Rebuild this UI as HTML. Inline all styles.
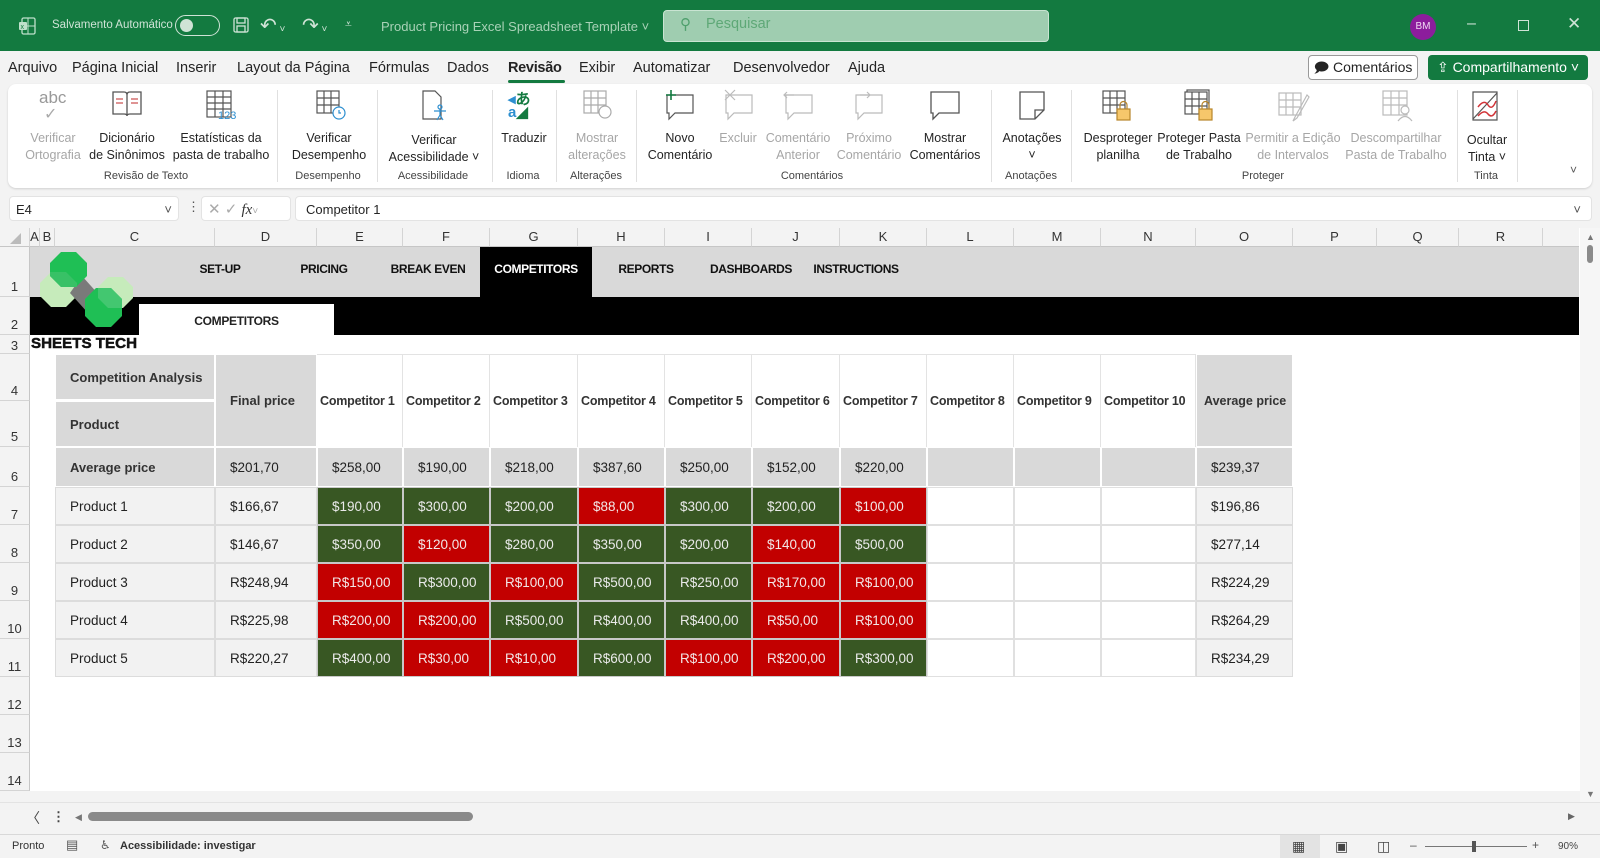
<!DOCTYPE html>
<html><head><meta charset="utf-8">
<style>
*{box-sizing:border-box;margin:0;padding:0}
body{width:1600px;height:858px;overflow:hidden;background:#f3f3f3;font-family:"Liberation Sans",sans-serif;position:relative;color:#242424}
.a{position:absolute}
.title{left:0;top:0;width:1600px;height:51px;background:#137a40}
.tw{color:#cfe3d6;font-size:12px;white-space:nowrap}
.menu span{position:absolute;top:60px;font-size:14.5px;color:#242424;white-space:nowrap}
.ribbon{left:8px;top:84px;width:1584px;height:104px;background:#fff;border-radius:8px;box-shadow:0 1px 2px rgba(0,0,0,.15)}
.btn{position:absolute;top:130px;font-size:12.5px;line-height:17px;text-align:center;white-space:nowrap;transform:translateX(-50%);color:#242424}
.dis{color:#a6a6a6}
.grp{position:absolute;top:170px;font-size:11px;transform:translateX(-50%);color:#444;white-space:nowrap}
.sep{position:absolute;top:90px;width:1px;height:92px;background:#e0e0e0}
.ic{position:absolute;top:89px}
.sheet{position:absolute;left:0;top:228px;width:1580px;display:grid;grid-template-columns:30px 10px 15px 160px 102px 86px 87px 88px 87px 87px 88px 87px 87px 87px 95px 97px 84px 82px 84px 36px;grid-template-rows:19px 50px 38px 19px 47px 46px 40px repeat(8,38px);background:#fff}
.ch{background:#f3f3f3;border-right:1px solid #d4d4d4;border-bottom:1px solid #c6c6c6;font-size:13px;text-align:center;line-height:18px;color:#333}
.rh{background:#f3f3f3;border-right:1px solid #c6c6c6;border-bottom:1px solid #d4d4d4;font-size:13px;display:flex;align-items:flex-end;justify-content:center;padding-bottom:2px;color:#333}
.c{font-size:13.5px;display:flex;align-items:center;padding-left:14px;white-space:nowrap}
.g{background:#d9d9d9;border:1px solid #fff;font-weight:bold;color:#333;font-size:13px}
.gb{background:#d9d9d9;border:1px solid #fff;color:#222}
.l{background:#f2f2f2;border:1px solid #dcdcdc;color:#222}
.w{background:#fff;border:1px solid #e0e0e0}
.G{background:#385723;color:#eaeaea;border:1px solid #c8c8c8}
.R{background:#c20000;color:#f2e6e6;border:1px solid #c8c8c8}
.hd{background:#fff;border-right:1px solid #e3e3e3;border-top:1px solid #e3e3e3;font-weight:bold;font-size:12.5px;color:#333;padding-left:3px;letter-spacing:-.2px}
.nav{font-weight:bold;font-size:12px;color:#111;position:absolute;top:262px;transform:translateX(-50%);white-space:nowrap;letter-spacing:-.4px}
</style></head><body>
<div class="a title"></div>
<svg class="a" style="left:17px;top:16px" width="20" height="20" viewBox="0 0 20 20"><rect x="5" y="2" width="13" height="16" rx="1.5" fill="none" stroke="#bfe0cb" stroke-width="1.3"/><line x1="11" y1="2" x2="11" y2="18" stroke="#bfe0cb"/><line x1="5" y1="10" x2="18" y2="10" stroke="#bfe0cb"/><rect x="2" y="6" width="8" height="8" rx="1" fill="#bfe0cb"/><text x="3.5" y="13" font-size="7" fill="#137a40" font-family="Liberation Sans">x</text></svg>
<div class="a tw" style="left:52px;top:19px;font-size:11.5px">Salvamento Automático</div>
<div class="a" style="left:175px;top:15px;width:45px;height:21px;border:1.5px solid #cfe3d6;border-radius:11px"></div>
<div class="a" style="left:180px;top:19px;width:13px;height:13px;border-radius:50%;background:#cfe3d6"></div>
<svg class="a" style="left:232px;top:16px" width="18" height="18" viewBox="0 0 18 18" fill="none" stroke="#cfe3d6" stroke-width="1.3"><rect x="2" y="2" width="14" height="14" rx="1.5"/><rect x="5" y="2" width="8" height="5"/><rect x="5" y="10" width="8" height="6"/></svg>
<div class="a tw" style="left:260px;top:13px;font-size:20px">↶<span style="font-size:10px"> ˅</span></div>
<div class="a tw" style="left:302px;top:13px;font-size:20px">↷<span style="font-size:10px"> ˅</span></div>
<div class="a tw" style="left:345px;top:17px;font-size:12px">⩡</div>
<div class="a tw" style="left:381px;top:19px;font-size:13px;color:#a9d2b7">Product Pricing Excel Spreadsheet Template ˅</div>
<div class="a" style="left:663px;top:10px;width:386px;height:32px;background:#9fcdb0;border:1px solid #c9e4d2;border-radius:4px"></div>
<div class="a" style="left:680px;top:15px;font-size:15px;color:#4fa06d">⚲</div>
<div class="a" style="left:706px;top:16px;font-size:14.5px;color:#5ea877">Pesquisar</div>
<div class="a" style="left:1410px;top:14px;width:26px;height:26px;border-radius:50%;background:#8c1d9c;color:#f0d9f3;font-size:10px;text-align:center;line-height:26px">BM</div>
<div class="a tw" style="left:1467px;top:15px;font-size:16px">–</div>
<div class="a" style="left:1518px;top:20px;width:11px;height:11px;border:1px solid #cfe3d6"></div>
<div class="a tw" style="left:1567px;top:14px;font-size:17px">✕</div>

<div class="menu">
<span style="left:8px">Arquivo</span><span style="left:72px">Página Inicial</span><span style="left:176px">Inserir</span><span style="left:237px">Layout da Página</span><span style="left:369px">Fórmulas</span><span style="left:447px">Dados</span><span style="left:508px;font-weight:bold;letter-spacing:-.3px">Revisão</span><span style="left:579px">Exibir</span><span style="left:633px">Automatizar</span><span style="left:733px">Desenvolvedor</span><span style="left:848px">Ajuda</span>
</div>
<div class="a" style="left:508px;top:80px;width:57px;height:3px;background:#137a40;border-radius:2px"></div>
<div class="a" style="left:1308px;top:55px;width:110px;height:25px;border:1px solid #999;border-radius:4px;background:#fff;font-size:14px;line-height:23px;text-align:center">🗩 Comentários</div>
<div class="a" style="left:1428px;top:55px;width:160px;height:25px;border-radius:4px;background:#137a40;color:#fff;font-size:14px;line-height:24px;text-align:center">⇪ Compartilhamento ˅</div>

<div class="a ribbon"></div>
<div class="ic dis" style="left:39px;top:88px;font-size:17px;color:#999">abc</div><div class="ic" style="left:44px;top:104px;font-size:16px;color:#aaa">✓</div>
<svg class="ic" style="left:111px" width="32" height="30" viewBox="0 0 32 30" fill="none" stroke="#555" stroke-width="1.3"><path d="M2 3h11q3 0 3 3v21q0-2-3-2H2zM30 3H19q-3 0-3 3v21q0-2 3-2h11z"/><path d="M5 10h7M5 14h7M20 10h7M20 14h7" stroke="#c55"/></svg>
<svg class="ic" style="left:205px" width="32" height="32" viewBox="0 0 32 32" fill="none" stroke="#555" stroke-width="1.2"><rect x="2" y="2" width="24" height="26"/><path d="M2 8h24M2 14h24M2 20h24M10 2v26M18 2v26"/><text x="13" y="30" font-size="11" fill="#2d8fd0" stroke="none" font-family="Liberation Sans">123</text></svg>
<svg class="ic" style="left:315px" width="32" height="32" viewBox="0 0 32 32" fill="none" stroke="#555" stroke-width="1.2"><rect x="2" y="2" width="22" height="22"/><path d="M2 9h22M2 16h22M9 2v22M16 2v22"/><circle cx="24" cy="24" r="6" stroke="#2d8fd0" fill="#fff"/><path d="M24 21v3h2" stroke="#2d8fd0"/></svg>
<svg class="ic" style="left:420px" width="30" height="34" viewBox="0 0 30 34" fill="none" stroke="#555" stroke-width="1.2"><path d="M3 2h12l6 6v22H3z"/><circle cx="20" cy="18" r="2" stroke="#2d8fd0"/><path d="M14 22h12M20 20v6l-3 5M20 26l3 5" stroke="#2d8fd0"/></svg>
<div class="ic" style="left:508px;top:88px;font-size:15px;color:#2d8fd0;font-weight:bold">◂<span style="color:#137a40">あ</span><br><span style="position:relative;top:-6px">a<span style="color:#137a40">◢</span></span></div>
<svg class="ic" style="left:582px" width="32" height="32" viewBox="0 0 32 32" fill="none" stroke="#aaa" stroke-width="1.2"><rect x="2" y="2" width="22" height="22"/><path d="M2 9h22M2 16h22M9 2v22M16 2v22"/><circle cx="23" cy="23" r="6" fill="#fff"/></svg>
<svg class="ic" style="left:663px" width="34" height="34" viewBox="0 0 34 34" fill="none" stroke="#555" stroke-width="1.2"><path d="M4 6h26v18H12l-6 6v-6H4z"/><path d="M8 1v10M3 6h10" stroke="#137a40" stroke-width="1.6"/></svg>
<svg class="ic" style="left:722px" width="34" height="34" viewBox="0 0 34 34" fill="none" stroke="#bbb" stroke-width="1.2"><path d="M4 6h26v18H12l-6 6v-6H4z"/><path d="M3 1l10 10M13 1L3 11"/></svg>
<svg class="ic" style="left:782px" width="34" height="34" viewBox="0 0 34 34" fill="none" stroke="#bbb" stroke-width="1.2"><path d="M4 6h26v18H12l-6 6v-6H4z"/><path d="M2 6h10M5 3L2 6l3 3"/></svg>
<svg class="ic" style="left:852px" width="34" height="34" viewBox="0 0 34 34" fill="none" stroke="#bbb" stroke-width="1.2"><path d="M4 6h26v18H12l-6 6v-6H4z"/><path d="M8 6h10M15 3l3 3-3 3"/></svg>
<svg class="ic" style="left:928px" width="34" height="34" viewBox="0 0 34 34" fill="none" stroke="#555" stroke-width="1.3"><path d="M3 3h28v21H11l-6 6v-6H3z"/></svg>
<svg class="ic" style="left:1017px" width="30" height="34" viewBox="0 0 30 34" fill="none" stroke="#555" stroke-width="1.3"><path d="M3 3h24v18l-9 9H3zM27 21h-9v9"/></svg>
<svg class="ic" style="left:1101px" width="34" height="34" viewBox="0 0 34 34" fill="none" stroke="#555" stroke-width="1.2"><rect x="2" y="2" width="22" height="22"/><path d="M2 9h22M2 16h22M9 2v22M16 2v22"/><rect x="16" y="20" width="13" height="11" fill="#f6c76b" stroke="#b7852b"/><path d="M19 20v-4a3.5 3.5 0 0 1 7 0v4" stroke="#b7852b"/></svg>
<svg class="ic" style="left:1183px" width="34" height="34" viewBox="0 0 34 34" fill="none" stroke="#555" stroke-width="1.2"><rect x="4" y="1" width="22" height="22"/><rect x="2" y="3" width="22" height="22" fill="#fff"/><path d="M2 10h22M2 17h22M9 3v22M16 3v22"/><rect x="16" y="20" width="13" height="11" fill="#f6c76b" stroke="#b7852b"/><path d="M19 20v-4a3.5 3.5 0 0 1 7 0v4" stroke="#b7852b"/></svg>
<svg class="ic" style="left:1277px" width="34" height="34" viewBox="0 0 34 34" fill="none" stroke="#bbb" stroke-width="1.2"><rect x="2" y="4" width="22" height="22"/><path d="M2 11h22M2 18h22M9 4v22M16 4v22M30 6L18 28l-2 4 4-3 12-21z"/></svg>
<svg class="ic" style="left:1381px" width="34" height="34" viewBox="0 0 34 34" fill="none" stroke="#bbb" stroke-width="1.2"><rect x="2" y="2" width="24" height="24"/><path d="M2 9h24M2 16h24M10 2v24M18 2v24"/><circle cx="24" cy="21" r="4" fill="#fff"/><path d="M17 32q7-9 14 0" fill="#fff"/></svg>
<svg class="ic" style="left:1470px" width="32" height="34" viewBox="0 0 32 34" fill="none" stroke="#555" stroke-width="1.2"><path d="M3 3h24v28H3z"/><path d="M3 30L27 4" /><path d="M8 18q6-8 10-2t8-4M8 27q6-7 10-2t8-3" stroke="#d13438" stroke-width="1.5"/></svg>

<div class="btn dis" style="left:53px">Verificar<br>Ortografia</div>
<div class="btn" style="left:127px">Dicionário<br>de Sinônimos</div>
<div class="btn" style="left:221px">Estatísticas da<br>pasta de trabalho</div>
<div class="sep" style="left:277px"></div>
<div class="btn" style="left:329px">Verificar<br>Desempenho</div>
<div class="sep" style="left:377px"></div>
<div class="btn" style="left:434px;top:132px">Verificar<br>Acessibilidade ˅</div>
<div class="sep" style="left:492px"></div>
<div class="btn" style="left:524px">Traduzir</div>
<div class="sep" style="left:556px"></div>
<div class="btn dis" style="left:597px">Mostrar<br>alterações</div>
<div class="sep" style="left:636px"></div>
<div class="btn" style="left:680px">Novo<br>Comentário</div>
<div class="btn dis" style="left:738px">Excluir</div>
<div class="btn dis" style="left:798px">Comentário<br>Anterior</div>
<div class="btn dis" style="left:869px">Próximo<br>Comentário</div>
<div class="btn" style="left:945px">Mostrar<br>Comentários</div>
<div class="sep" style="left:991px"></div>
<div class="btn" style="left:1032px">Anotações<br>˅</div>
<div class="sep" style="left:1071px"></div>
<div class="btn" style="left:1118px">Desproteger<br>planilha</div>
<div class="btn" style="left:1199px">Proteger Pasta<br>de Trabalho</div>
<div class="btn dis" style="left:1293px">Permitir a Edição<br>de Intervalos</div>
<div class="btn dis" style="left:1396px">Descompartilhar<br>Pasta de Trabalho</div>
<div class="sep" style="left:1457px"></div>
<div class="btn" style="left:1487px;top:132px">Ocultar<br>Tinta ˅</div>
<div class="sep" style="left:1517px"></div>
<div class="a" style="left:1570px;top:163px;font-size:12px;color:#555">˅</div>
<div class="grp" style="left:146px">Revisão de Texto</div>
<div class="grp" style="left:328px">Desempenho</div>
<div class="grp" style="left:433px">Acessibilidade</div>
<div class="grp" style="left:523px">Idioma</div>
<div class="grp" style="left:596px">Alterações</div>
<div class="grp" style="left:812px">Comentários</div>
<div class="grp" style="left:1031px">Anotações</div>
<div class="grp" style="left:1263px">Proteger</div>
<div class="grp" style="left:1486px">Tinta</div>

<div class="a" style="left:9px;top:196px;width:170px;height:25px;background:#fff;border-radius:4px;border:1px solid #e3e3e3;font-size:13px;padding:5px 6px">E4<span style="float:right;color:#555">˅</span></div>
<div class="a" style="left:187px;top:199px;font-size:13px;color:#555">⋮</div>
<div class="a" style="left:201px;top:196px;width:90px;height:25px;background:#fff;border-radius:4px;border:1px solid #e3e3e3;font-size:15px;color:#aaa;padding:3px 6px;white-space:nowrap">✕ ✓ <i style="color:#333;font-family:'Liberation Serif',serif">fx</i><span style="font-size:10px">˅</span></div>
<div class="a" style="left:295px;top:196px;width:1297px;height:25px;background:#fff;border-radius:4px;border:1px solid #e3e3e3;font-size:13px;padding:5px 10px">Competitor 1<span style="float:right;color:#555">˅</span></div>

<div class="sheet">
<div class="ch" style="grid-column:1;grid-row:1"><svg width="14" height="14" style="margin-top:3px"><path d="M13 2v11H2z" fill="#bbb"/></svg></div>
<div class="ch">A</div><div class="ch">B</div><div class="ch">C</div><div class="ch">D</div><div class="ch">E</div><div class="ch">F</div><div class="ch">G</div><div class="ch">H</div><div class="ch">I</div><div class="ch">J</div><div class="ch">K</div><div class="ch">L</div><div class="ch">M</div><div class="ch">N</div><div class="ch">O</div><div class="ch">P</div><div class="ch">Q</div><div class="ch">R</div><div class="ch" style="border-right:none"></div>
<div class="rh" style="grid-column:1;grid-row:2">1</div>
<div class="rh" style="grid-column:1;grid-row:3">2</div>
<div class="rh" style="grid-column:1;grid-row:4;padding-bottom:0">3</div>
<div class="rh" style="grid-column:1;grid-row:5">4</div>
<div class="rh" style="grid-column:1;grid-row:6">5</div>
<div class="rh" style="grid-column:1;grid-row:7">6</div>
<div class="rh" style="grid-column:1;grid-row:8">7</div>
<div class="rh" style="grid-column:1;grid-row:9">8</div>
<div class="rh" style="grid-column:1;grid-row:10">9</div>
<div class="rh" style="grid-column:1;grid-row:11">10</div>
<div class="rh" style="grid-column:1;grid-row:12">11</div>
<div class="rh" style="grid-column:1;grid-row:13">12</div>
<div class="rh" style="grid-column:1;grid-row:14">13</div>
<div class="rh" style="grid-column:1;grid-row:15">14</div>
<div style="grid-column:2/21;grid-row:2;background:#d9d9d9"></div>
<div style="grid-column:2/21;grid-row:3;background:#000"></div>
<div class="c g" style="grid-column:4;grid-row:5;border-bottom:2px solid #fff">Competition Analysis</div>
<div class="c g" style="grid-column:4;grid-row:6">Product</div>
<div class="c g" style="grid-column:5;grid-row:5/7">Final price</div>
<div class="c hd" style="grid-column:6;grid-row:5/7">Competitor 1</div>
<div class="c hd" style="grid-column:7;grid-row:5/7">Competitor 2</div>
<div class="c hd" style="grid-column:8;grid-row:5/7">Competitor 3</div>
<div class="c hd" style="grid-column:9;grid-row:5/7">Competitor 4</div>
<div class="c hd" style="grid-column:10;grid-row:5/7">Competitor 5</div>
<div class="c hd" style="grid-column:11;grid-row:5/7">Competitor 6</div>
<div class="c hd" style="grid-column:12;grid-row:5/7">Competitor 7</div>
<div class="c hd" style="grid-column:13;grid-row:5/7">Competitor 8</div>
<div class="c hd" style="grid-column:14;grid-row:5/7">Competitor 9</div>
<div class="c hd" style="grid-column:15;grid-row:5/7">Competitor 10</div>
<div class="c g" style="grid-column:16;grid-row:5/7;padding-left:7px;font-size:12.5px">Average price</div>
<div class="c g" style="grid-column:4;grid-row:7">Average price</div>
<div class="c gb" style="grid-column:5;grid-row:7">$201,70</div>
<div class="c gb" style="grid-column:6;grid-row:7">$258,00</div>
<div class="c gb" style="grid-column:7;grid-row:7">$190,00</div>
<div class="c gb" style="grid-column:8;grid-row:7">$218,00</div>
<div class="c gb" style="grid-column:9;grid-row:7">$387,60</div>
<div class="c gb" style="grid-column:10;grid-row:7">$250,00</div>
<div class="c gb" style="grid-column:11;grid-row:7">$152,00</div>
<div class="c gb" style="grid-column:12;grid-row:7">$220,00</div>
<div class="c gb" style="grid-column:13;grid-row:7"></div>
<div class="c gb" style="grid-column:14;grid-row:7"></div>
<div class="c gb" style="grid-column:15;grid-row:7"></div>
<div class="c gb" style="grid-column:16;grid-row:7">$239,37</div>

<div class="c l" style="grid-column:4;grid-row:8">Product 1</div><div class="c l" style="grid-column:5;grid-row:8">$166,67</div>
<div class="c G" style="grid-column:6;grid-row:8">$190,00</div><div class="c G" style="grid-column:7;grid-row:8">$300,00</div><div class="c G" style="grid-column:8;grid-row:8">$200,00</div><div class="c R" style="grid-column:9;grid-row:8">$88,00</div><div class="c G" style="grid-column:10;grid-row:8">$300,00</div><div class="c G" style="grid-column:11;grid-row:8">$200,00</div><div class="c R" style="grid-column:12;grid-row:8">$100,00</div>
<div class="c w" style="grid-column:13;grid-row:8"></div><div class="c w" style="grid-column:14;grid-row:8"></div><div class="c w" style="grid-column:15;grid-row:8"></div><div class="c l" style="grid-column:16;grid-row:8">$196,86</div>

<div class="c l" style="grid-column:4;grid-row:9">Product 2</div><div class="c l" style="grid-column:5;grid-row:9">$146,67</div>
<div class="c G" style="grid-column:6;grid-row:9">$350,00</div><div class="c R" style="grid-column:7;grid-row:9">$120,00</div><div class="c G" style="grid-column:8;grid-row:9">$280,00</div><div class="c G" style="grid-column:9;grid-row:9">$350,00</div><div class="c G" style="grid-column:10;grid-row:9">$200,00</div><div class="c R" style="grid-column:11;grid-row:9">$140,00</div><div class="c G" style="grid-column:12;grid-row:9">$500,00</div>
<div class="c w" style="grid-column:13;grid-row:9"></div><div class="c w" style="grid-column:14;grid-row:9"></div><div class="c w" style="grid-column:15;grid-row:9"></div><div class="c l" style="grid-column:16;grid-row:9">$277,14</div>

<div class="c l" style="grid-column:4;grid-row:10">Product 3</div><div class="c l" style="grid-column:5;grid-row:10">R$248,94</div>
<div class="c R" style="grid-column:6;grid-row:10">R$150,00</div><div class="c G" style="grid-column:7;grid-row:10">R$300,00</div><div class="c R" style="grid-column:8;grid-row:10">R$100,00</div><div class="c G" style="grid-column:9;grid-row:10">R$500,00</div><div class="c G" style="grid-column:10;grid-row:10">R$250,00</div><div class="c R" style="grid-column:11;grid-row:10">R$170,00</div><div class="c R" style="grid-column:12;grid-row:10">R$100,00</div>
<div class="c w" style="grid-column:13;grid-row:10"></div><div class="c w" style="grid-column:14;grid-row:10"></div><div class="c w" style="grid-column:15;grid-row:10"></div><div class="c l" style="grid-column:16;grid-row:10">R$224,29</div>

<div class="c l" style="grid-column:4;grid-row:11">Product 4</div><div class="c l" style="grid-column:5;grid-row:11">R$225,98</div>
<div class="c R" style="grid-column:6;grid-row:11">R$200,00</div><div class="c R" style="grid-column:7;grid-row:11">R$200,00</div><div class="c G" style="grid-column:8;grid-row:11">R$500,00</div><div class="c G" style="grid-column:9;grid-row:11">R$400,00</div><div class="c G" style="grid-column:10;grid-row:11">R$400,00</div><div class="c R" style="grid-column:11;grid-row:11">R$50,00</div><div class="c R" style="grid-column:12;grid-row:11">R$100,00</div>
<div class="c w" style="grid-column:13;grid-row:11"></div><div class="c w" style="grid-column:14;grid-row:11"></div><div class="c w" style="grid-column:15;grid-row:11"></div><div class="c l" style="grid-column:16;grid-row:11">R$264,29</div>

<div class="c l" style="grid-column:4;grid-row:12">Product 5</div><div class="c l" style="grid-column:5;grid-row:12">R$220,27</div>
<div class="c G" style="grid-column:6;grid-row:12">R$400,00</div><div class="c R" style="grid-column:7;grid-row:12">R$30,00</div><div class="c R" style="grid-column:8;grid-row:12">R$10,00</div><div class="c G" style="grid-column:9;grid-row:12">R$600,00</div><div class="c R" style="grid-column:10;grid-row:12">R$100,00</div><div class="c R" style="grid-column:11;grid-row:12">R$200,00</div><div class="c G" style="grid-column:12;grid-row:12">R$300,00</div>
<div class="c w" style="grid-column:13;grid-row:12"></div><div class="c w" style="grid-column:14;grid-row:12"></div><div class="c w" style="grid-column:15;grid-row:12"></div><div class="c l" style="grid-column:16;grid-row:12">R$234,29</div>
</div>
<div class="a" style="left:480px;top:247px;width:112px;height:50px;background:#000"></div>
<div class="a" style="left:139px;top:304px;width:195px;height:31px;background:#fff;font-weight:bold;font-size:12px;text-align:center;line-height:34px;color:#222;letter-spacing:-.3px">COMPETITORS</div>
<div class="nav" style="left:220px">SET-UP</div>
<div class="nav" style="left:324px">PRICING</div>
<div class="nav" style="left:428px">BREAK EVEN</div>
<div class="nav" style="left:536px;color:#fff">COMPETITORS</div>
<div class="nav" style="left:646px">REPORTS</div>
<div class="nav" style="left:751px">DASHBOARDS</div>
<div class="nav" style="left:856px">INSTRUCTIONS</div>
<svg class="a" style="left:31px;top:247px" width="110" height="108" viewBox="31 247 110 108">
<polygon points="51,272 66,272 77,283 77,296 66,307 51,307 40,296 40,283" fill="#c6ebbb"/>
<polygon points="108,277 123,277 133,287 133,298 123,308 108,308 98,298 98,287" fill="#c6ebbb"/>
<polygon points="82,276 100,296 88,313 70,293" fill="#7a7a7a"/>
<polygon points="61,252 76,252 87,263 87,276 76,287 61,287 50,276 50,263" fill="#1fbf55"/>
<polygon points="96,288 111,288 122,299 122,316 111,327 96,327 85,316 85,299" fill="#1fbf55"/>
<polygon points="50,272 66,272 77,283 77,287 61,287 50,276" fill="#3fc26a" opacity=".8"/>
<polygon points="98,288 111,288 122,299 122,308 108,308 98,298" fill="#4cc977" opacity=".8"/>
<text x="31" y="348" font-family="Liberation Sans" font-weight="bold" font-size="15" fill="#111" textLength="106" lengthAdjust="spacingAndGlyphs" stroke="#111" stroke-width=".5">SHEETS TECH</text>
</svg>
<div class="a" style="left:1580px;top:228px;width:20px;height:574px;background:#f6f6f6"></div>
<div class="a" style="left:1586px;top:232px;font-size:9px;color:#777">▲</div>
<div class="a" style="left:1587px;top:245px;width:6px;height:18px;background:#8a8a8a;border-radius:3px"></div>
<div class="a" style="left:1586px;top:789px;font-size:9px;color:#777">▼</div>
<div class="a" style="left:0;top:802px;width:1600px;height:31px;background:#f3f3f3;border-top:1px solid #e3e3e3"></div>
<div class="a" style="left:26px;top:808px;font-size:14px;color:#444">〈</div>
<div class="a" style="left:52px;top:809px;font-size:13px;color:#444;font-weight:bold">⋮</div>
<div class="a" style="left:75px;top:812px;font-size:9px;color:#777">◀</div>
<div class="a" style="left:88px;top:812px;width:385px;height:9px;background:#8a8a8a;border-radius:5px"></div>
<div class="a" style="left:1568px;top:811px;font-size:9px;color:#666">▶</div>
<div class="a" style="left:0;top:834px;width:1600px;height:24px;background:#f3f3f3;border-top:1px solid #d8d8d8"></div>
<div class="a" style="left:12px;top:840px;font-size:11px;color:#333">Pronto</div>
<div class="a" style="left:66px;top:837px;font-size:13px;color:#555">▤</div>
<div class="a" style="left:100px;top:838px;font-size:12px;color:#555">♿︎</div>
<div class="a" style="left:120px;top:840px;font-size:11px;font-weight:bold;color:#333">Acessibilidade: investigar</div>
<div class="a" style="left:1280px;top:835px;width:40px;height:23px;background:#e3e3e3"></div>
<div class="a" style="left:1292px;top:838px;font-size:14px;color:#444">▦</div>
<div class="a" style="left:1335px;top:838px;font-size:14px;color:#444">▣</div>
<div class="a" style="left:1377px;top:838px;font-size:14px;color:#444">◫</div>
<div class="a" style="left:1410px;top:838px;font-size:12px;color:#555">–</div>
<div class="a" style="left:1425px;top:846px;width:102px;height:1px;background:#777"></div>
<div class="a" style="left:1472px;top:841px;width:4px;height:11px;background:#555"></div>
<div class="a" style="left:1532px;top:838px;font-size:12px;color:#555">+</div>
<div class="a" style="left:1558px;top:841px;font-size:10px;color:#444">90%</div>
</body></html>
